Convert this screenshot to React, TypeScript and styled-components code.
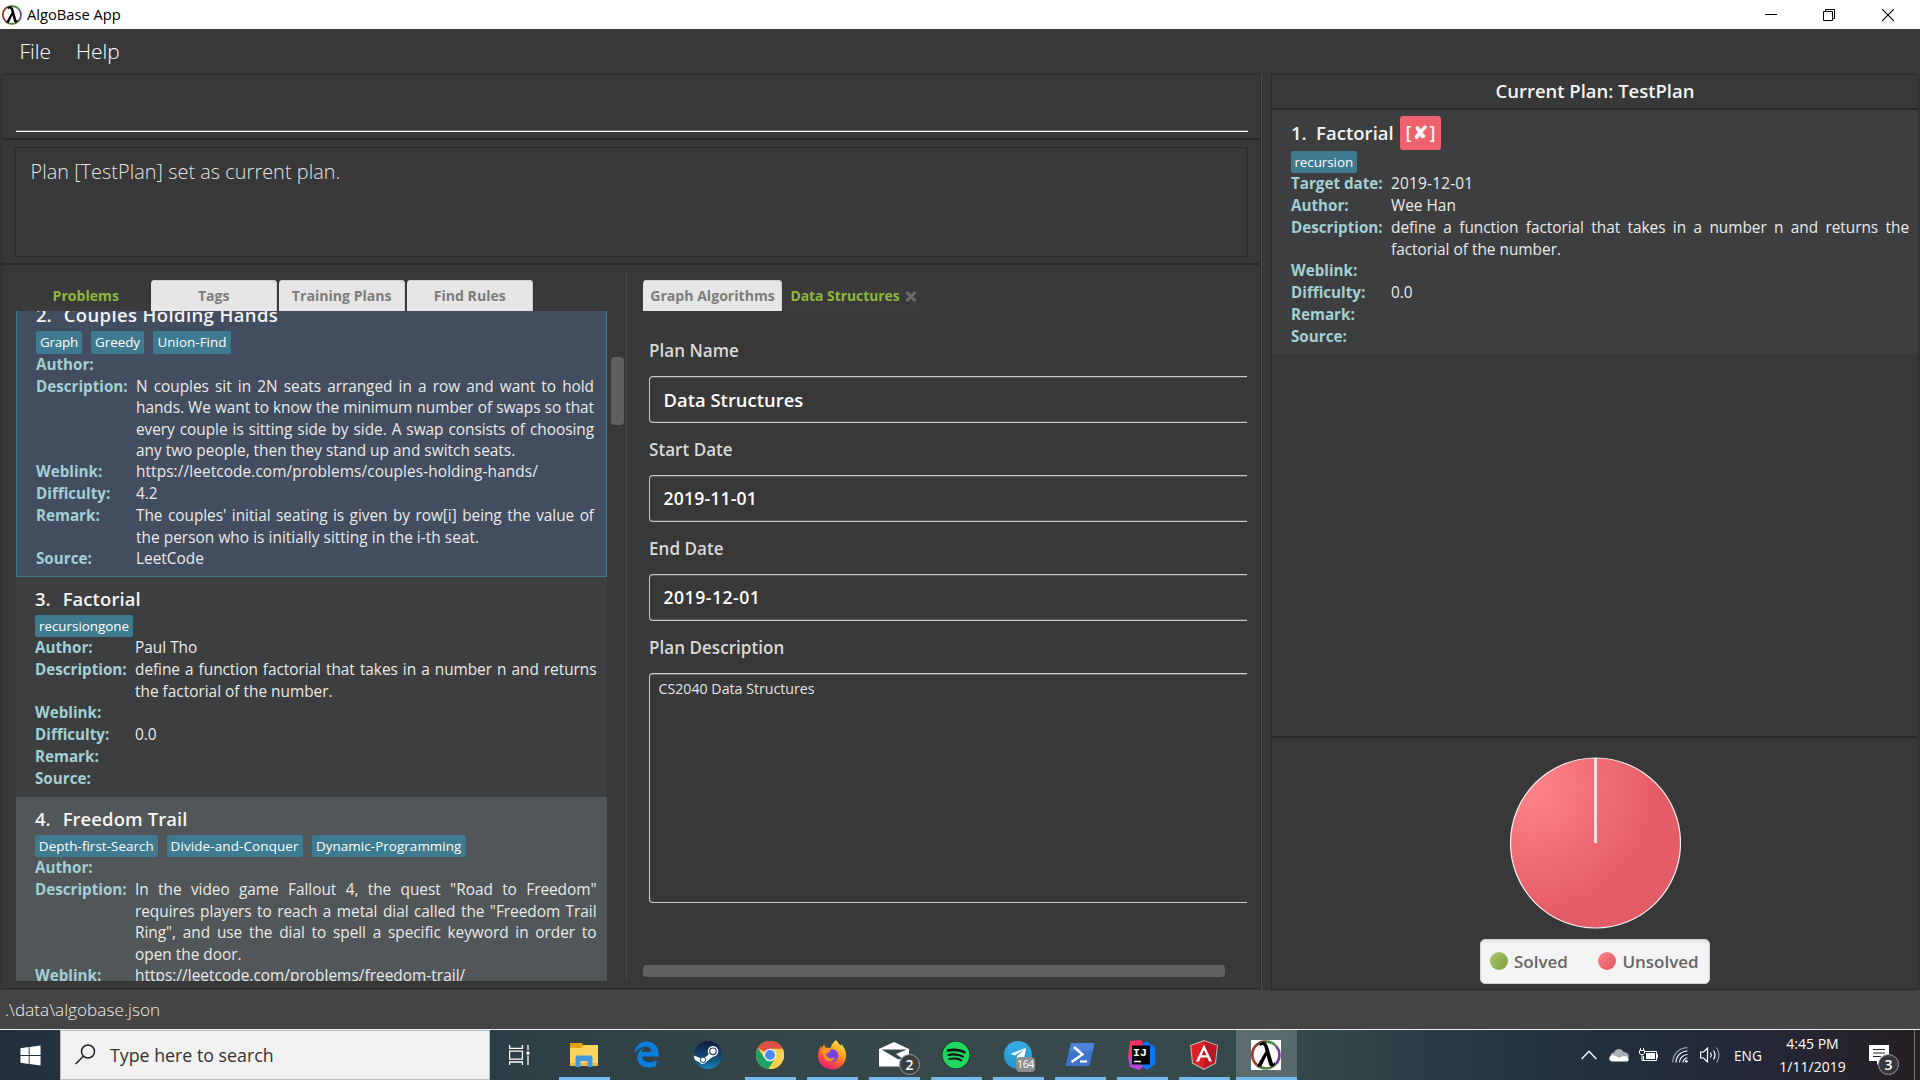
import React from "react";
import styled, { createGlobalStyle, css } from "styled-components";
import { FaEdgeLegacy, FaSpotify, FaTelegramPlane, FaWindows } from "react-icons/fa";

const GlobalStyle = createGlobalStyle`
  * { box-sizing: border-box; }
  body { margin: 0; background: #383838; overflow: hidden; font-family: "Open Sans", "Noto Sans", sans-serif; }
`;

const edge = "#2b2b2b";
const teal = "#3e7b91";

/* ---------- window chrome ---------- */

const Desktop = styled.div`
  width: 1920px;
  height: 1080px;
  display: flex;
  flex-direction: column;
  background: #383838;
  overflow: hidden;
`;

const TitleBar = styled.header`
  height: 29px;
  flex: none;
  display: flex;
  align-items: center;
  background: #fff;
  padding: 0 3px 0 2px;
  color: #000;
`;

const AppTitle = styled.span`
  margin-left: 5px;
  flex: 1;
  font-size: 14.7px;
  line-height: 29px;
  height: 29px;
`;

const WindowButton = styled.button`
  width: 58.5px;
  height: 28px;
  padding: 0;
  border: 0;
  background: none;
  display: grid;
  place-items: center;
`;

const MenuBar = styled.nav`
  height: 45px;
  flex: none;
  display: flex;
  align-items: center;
  gap: 25px;
  padding: 0 0 1px 19.5px;
  color: #fff;
  font-size: 20.9px;
  font-weight: 300;
`;

const Main = styled.main`
  height: 916px;
  flex: none;
  display: flex;
  padding-left: 1px;
`;

const LeftColumn = styled.section`
  width: 1260px;
  display: flex;
  flex-direction: column;
  border: 1px solid ${edge};
  border-width: 1px 1px 0;
`;

const ColumnDivider = styled.div`
  width: 10px;
  border-left: 1px solid #4d4d4d;
`;

const StatusBar = styled.footer`
  height: 39px;
  flex: none;
  background: #444;
  color: #eee;
  font-size: 17.1px;
  font-weight: 300;
  line-height: 39px;
  padding-left: 5px;
  letter-spacing: 0.05px;
`;

/* ---------- command + result ---------- */

const CommandPane = styled.div`
  height: 65px;
  flex: none;
  padding: 0 12px 0 14px;
  border-bottom: 2px solid ${edge};
`;

const CommandInput = styled.input`
  display: block;
  width: 100%;
  height: 57px;
  padding: 0;
  border: 0;
  outline: 0;
  background: transparent;
  color: #fff;
  border-bottom: 1px solid #fff;
  box-shadow: inset 0 -1px 0 #6c6c6c;
`;

const ResultPane = styled.div`
  height: 125px;
  flex: none;
  padding: 7px 12px 6px 13px;
  border-bottom: 2px solid ${edge};
`;

const ResultBox = styled.div`
  height: 110px;
  border: 1px solid ${edge};
  padding: 10px 0 0 14.5px;
  color: #e4e4e4;
  font-size: 19.84px;
  font-weight: 300;
  line-height: 27px;
  letter-spacing: 0.06px;
`;

/* ---------- lower split ---------- */

const SplitPane = styled.div`
  height: 724px;
  flex: none;
  display: flex;
  padding-top: 8px;
  border-bottom: 1px solid ${edge};
`;

const ListSide = styled.div`
  width: 624px;
  padding: 7px 0 0 14px;
`;

const DetailSide = styled.div`
  width: 622px;
  height: 707px;
  padding: 7px 0 0 16px;
  border-left: 1px solid #4a4a4a;
`;

const TabBar = styled.div<{ $indent?: number; $gap: number }>`
  display: flex;
  height: 31px;
  gap: ${(p) => p.$gap}px;
  padding-left: ${(p) => p.$indent ?? 0}px;
`;

const Tab = styled.div<{ $active?: boolean; $width: number; $pad?: number }>`
  width: ${(p) => p.$width}px;
  display: flex;
  align-items: center;
  justify-content: ${(p) => (p.$pad ? "flex-start" : "center")};
  padding-left: ${(p) => p.$pad ?? 0}px;
  gap: 5px;
  border-radius: 4px 4px 0 0;
  font-size: 14.1px;
  font-weight: 700;
  white-space: nowrap;
  ${(p) =>
    p.$active
      ? css`
          background: #3a3a3a;
          color: #8fb83e;
        `
      : css`
          background: #e6e6e6;
          color: #7c7c7c;
          box-shadow: inset -1px 1px 0 #cfcfcf;
        `}
`;

const ClosableTab = styled(Tab)`
  font-size: 13.85px;
`;

const ListRow = styled.div`
  display: flex;
  height: 670px;
`;

const ProblemList = styled.div`
  width: 591px;
  height: 670px;
  overflow: hidden;
  display: flex;
  flex-direction: column;
`;

const VerticalTrack = styled.div`
  padding: 46px 0 0 4px;
`;

const VerticalThumb = styled.div`
  width: 13px;
  height: 68px;
  border-radius: 4px;
  background: #606060;
`;

const CellTitle = styled.h2<{ $tracking?: number }>`
  display: flex;
  height: 25px;
  margin: 0 0 3.7px;
  color: #f4f4f4;
  font-size: 18.45px;
  font-weight: 600;
  line-height: 25px;
  white-space: nowrap;
  letter-spacing: ${(p) => p.$tracking ?? 0.1}px;
`;

const Cell = styled.article<{ $tone: "even" | "odd" | "selected" }>`
  flex: none;
  padding: 9.3px 10.5px 6.5px 19px;
  background: ${(p) => ({ even: "#3c3e3f", odd: "#515658", selected: "#424d5f" })[p.$tone]};
  ${(p) =>
    p.$tone === "selected" &&
    css`
      margin-top: -18px;
      padding: 8px 12px 5.6px 19px;
      border: 1px solid ${teal};
      ${CellTitle} {
        margin-bottom: 4.3px;
      }
    `}
`;

const CellIndex = styled.span<{ $gap: number }>`
  margin-right: ${(p) => p.$gap}px;
  letter-spacing: 0;
`;

const Tags = styled.div`
  display: flex;
  gap: 9px;
  height: 22.7px;
`;

const Tag = styled.span<{ $width: number; $tracking: number }>`
  width: ${(p) => p.$width}px;
  border-radius: 2px;
  background: ${teal};
  color: #fff;
  font-size: 13.4px;
  line-height: 22px;
  letter-spacing: ${(p) => p.$tracking}px;
  text-align: center;
  white-space: nowrap;
`;

const Field = styled.div`
  display: grid;
  grid-template-columns: 100px 1fr;
`;

const FieldName = styled.span`
  height: 22px;
  color: #a3d0d5;
  font-size: 15.2px;
  font-weight: 700;
  line-height: 21px;
  white-space: nowrap;
`;

const FieldValue = styled.div`
  color: #eaeaea;
  font-size: 15.4px;
`;

const Line = styled.div<{ $fill: boolean; $tracking: number }>`
  height: 21.3px;
  line-height: 21.3px;
  white-space: nowrap;
  letter-spacing: ${(p) => p.$tracking}px;
  &:first-child {
    height: 21.5px;
    line-height: 21.5px;
  }
  ${(p) =>
    p.$fill &&
    css`
      white-space: normal;
      text-align: justify;
      text-align-last: justify;
    `}
`;

/* ---------- plan form ---------- */

const Form = styled.div`
  height: 653px;
  padding: 26.4px 0 0 6px;
  width: 604px;
  overflow: hidden;
`;

const FormLabel = styled.label`
  display: block;
  height: 26px;
  margin-bottom: 12.6px;
  color: #d9d9d9;
  font-size: 17.05px;
  font-weight: 600;
  line-height: 28px;
  letter-spacing: 0.03px;
`;

const FormInput = styled.div<{ $tracking?: number }>`
  height: 47px;
  margin-bottom: 13.4px;
  padding-left: 13.5px;
  border: 1px solid #c8c8c8;
  border-right: 0;
  border-radius: 4px 0 0 4px;
  box-shadow: inset 0 1px 0 #5a5a5a, inset 0 -1px 0 #5a5a5a;
  color: #fff;
  font-size: 18.33px;
  font-weight: 600;
  line-height: 45px;
  letter-spacing: ${(p) => p.$tracking ?? 0.05}px;
`;

const FormDate = styled(FormInput)`
  font-size: 17.6px;
  line-height: 45.5px;
`;

const FormArea = styled.div`
  height: 230px;
  padding: 4px 0 0 8.5px;
  border: 1px solid #d0d0d0;
  border-right: 0;
  border-radius: 4px 0 0 4px;
  box-shadow: inset 0 1px 0 #6a6a6a;
  color: #e4e4e4;
  font-size: 14.2px;
  line-height: 22px;
`;

const HorizontalThumb = styled.div`
  width: 582px;
  height: 12px;
  margin-top: 1px;
  border-radius: 4px;
  background: #616161;
`;

/* ---------- current plan ---------- */

const RightColumn = styled.section`
  width: 648px;
  display: flex;
  flex-direction: column;
  border: 1px solid ${edge};
`;

const PlanHeading = styled.h1`
  height: 35px;
  flex: none;
  margin: 0;
  border-bottom: 2px solid ${edge};
  color: #f4f4f4;
  font-size: 18.47px;
  font-weight: 600;
  line-height: 32px;
  text-align: center;
`;

const PlanList = styled.div`
  height: 628px;
  flex: none;
  border-bottom: 2px solid ${edge};
`;

const PlanCell = styled.article`
  height: 244px;
  padding: 6px 9px 0 19px;
  background: #3c3e3f;
`;

const PlanTitle = styled(CellTitle)`
  height: 34px;
  margin: 0 0 0.5px;
  line-height: 33.5px;
`;

const UnsolvedMark = styled.span`
  width: 41px;
  height: 34px;
  margin-left: 6.5px;
  padding-left: 1px;
  border-radius: 3px;
  background: #ee626e;
  text-align: center;
  font-size: 18px;
  letter-spacing: 1.6px;
`;

const ChartPane = styled.div`
  flex: 1;
  display: flex;
  flex-direction: column;
  align-items: center;
  padding-top: 18.6px;
`;

const Legend = styled.div`
  width: 230px;
  height: 45px;
  margin-top: 10px;
  display: flex;
  align-items: center;
  padding-left: 8.5px;
  gap: 30px;
  border: 1px solid #cfcfcf;
  border-radius: 5px;
  background: #f4f4f4;
  box-shadow: inset 0 2px 2px #e4e4e4;
`;

const LegendItem = styled.span`
  display: flex;
  align-items: center;
  gap: 6.5px;
  color: #666;
  font-size: 17px;
  font-weight: 600;
`;

const Dot = styled.i<{ $from: string; $to: string }>`
  width: 18px;
  height: 18px;
  border-radius: 50%;
  background: linear-gradient(135deg, ${(p) => p.$from}, ${(p) => p.$to} 70%);
`;

/* ---------- taskbar ---------- */

const Taskbar = styled.div`
  height: 51px;
  flex: none;
  display: flex;
  border-top: 1px solid #f0f0f0;
  background: linear-gradient(90deg, #22303d 0, #2c3d45 490px, #364749 800px, #384a4c 1100px, #33494b 1300px, #293c44 1430px, #22303d 1600px, #22293a 1730px, #26242f 1820px, #251f23 1920px);
`;

const StartButton = styled.div`
  width: 60px;
  display: grid;
  place-items: center;
  color: #fff;
  font-size: 23px;
`;

const Search = styled.div`
  width: 430px;
  display: flex;
  align-items: center;
  gap: 14px;
  padding: 0 0 1px 14px;
  border: 1px solid #bdbdbd;
  background: #f1f1f1;
  color: #333;
  font-size: 17.8px;
`;

const TaskView = styled.div`
  width: 63px;
  display: grid;
  place-items: center start;
  padding-left: 19px;
`;

const TaskItem = styled.div<{ $state?: "running" | "active" }>`
  position: relative;
  width: 62px;
  display: grid;
  place-items: center;
  padding-bottom: 1px;
  background: ${(p) => (p.$state === "active" ? "linear-gradient(90deg, #5d6d6e, #56696b)" : "none")};
  &::after {
    content: "";
    position: absolute;
    bottom: 0;
    left: ${(p) => (p.$state === "active" ? 0 : 6)}px;
    right: ${(p) => (p.$state === "active" ? 0 : 5)}px;
    height: 3px;
    background: ${(p) => (p.$state ? "#76b9ed" : "none")};
  }
`;

const ActiveTaskItem = styled(TaskItem)`
  width: 61px;
  margin-left: 1px;
  padding-right: 1px;
`;

const Disc = styled.span<{ $back: string; $fore: string }>`
  width: 28px;
  height: 28px;
  border-radius: 50%;
  display: grid;
  place-items: center;
  background: ${(p) => p.$back};
  color: ${(p) => p.$fore};
  overflow: hidden;
`;

const CountBadge = styled.span`
  position: absolute;
  left: 36px;
  top: 24px;
  width: 21px;
  height: 21px;
  border: 1px solid #9a9d9e;
  border-radius: 50%;
  background: #3b3f40;
  color: #fff;
  font-size: 14px;
  font-weight: 600;
  line-height: 19px;
  text-align: center;
`;

const UnreadBadge = styled.span`
  position: absolute;
  left: 29px;
  top: 27px;
  width: 19px;
  height: 15px;
  border-radius: 4px;
  background: #8b8f91;
  color: #fff;
  font-size: 10.5px;
  line-height: 14px;
  text-align: center;
  letter-spacing: -0.4px;
`;

const Spacer = styled.div`
  flex: 1;
`;

const Tray = styled.div`
  display: flex;
  align-items: center;
  color: #fff;
`;

const Language = styled.span`
  width: 45px;
  padding-left: 2px;
  font-size: 13.7px;
`;

const Clock = styled.div`
  width: 71px;
  font-size: 14px;
  line-height: 23px;
  text-align: center;
`;

const Notifications = styled.div`
  position: relative;
  width: 65px;
  height: 50px;
  margin-left: 2px;
  padding: 15px 0 0 19px;
  border-right: 1px solid #777;
`;

const NotificationCount = styled(CountBadge)`
  left: 28px;
  background: #37363c;
`;

const TrayIcon = styled.svg<{ $after: number }>`
  display: block;
  margin-right: ${(p) => p.$after}px;
`;

const ShowDesktop = styled.div`
  width: 5px;
`;

/* ---------- icons ---------- */

const LambdaIcon = ({ size }: { size: number }) => (
  <svg width={size} height={size} viewBox="0 0 30 30">
    <rect width="30" height="30" fill="#fff" />
    <g fill="none" strokeWidth="2.6">
      <path d="M5 5.5A13.4 13.4 0 0 1 15 1.6" stroke="#5f4630" />
      <path d="M15 1.6A13.4 13.4 0 0 1 25 6" stroke="#4f8a45" />
      <path d="M25 6A13.4 13.4 0 0 1 25 24" stroke="#6c3f94" />
      <path d="M25 24A13.4 13.4 0 0 1 6 25" stroke="#557c3c" />
      <path d="M6 25A13.4 13.4 0 0 1 5 5.5" stroke="#a33420" />
    </g>
    <path d="M8.5 3.8C12 1 15.8 2 17 6.500L21.500 22c.5 2 1.300 2 2.300 0l.7 1c-1.500 4.500-5.500 5-6.700.5L15.600 15.500 10.300 26.500H5.600L14.500 11.200 13.600 7.600C12.800 4.700 11 4.500 9 6.200Z" fill="#000" />
  </svg>
);

const ExplorerIcon = () => (
  <svg width="28" height="24" viewBox="0 0 28 24">
    <path d="M0 0h12l2 3v3H0z" fill="#e0a10a" />
    <path d="M0 5h11l3-3h14v21H0z" fill="#ffd35e" />
    <path d="M0 20h28v3H0z" fill="#efbd3b" />
    <path d="M5.500 24V14.500q0-2 2-2h13q2 0 2 2V24h-5v-6h-7v6z" fill="#3d9ae0" />
  </svg>
);

const SteamIcon = () => (
  <Disc $back="linear-gradient(#131b3d, #12507c 65%, #1a86b8)" $fore="#fff">
    <svg width="28" height="28" viewBox="0 0 28 28">
      <path d="M0 14.500 8.500 18l5-3.500 4.500-5.500 4 4.500-7.500 5.500-3.500 3q-3 2.500-5.500-.8L0 18.500z" fill="#fff" />
      <circle cx="19" cy="10.300" r="5.300" fill="#fff" />
      <circle cx="19" cy="10.300" r="3.300" fill="#fff" stroke="#25476e" strokeWidth="1.200" />
      <circle cx="9" cy="18.800" r="2.700" fill="#fff" stroke="#25476e" strokeWidth="1" />
    </svg>
  </Disc>
);

const ChromeIcon = () => (
  <svg width="28" height="28" viewBox="0 0 28 28">
    <circle cx="14" cy="14" r="14" fill="#fbd04d" />
    <path d="M14 14 1.900 7A14 14 0 0 1 26.500 7.500z" fill="#dd5144" />
    <path d="M14 14V7.700h12.500A14 14 0 0 0 14 0z" fill="#dd5144" />
    <path d="M1.900 7A14 14 0 0 0 12.500 27.900L19.400 17.200 14 14 8.600 17.200z" fill="#1da462" />
    <path d="M26.600 7.700H14l5.400 9.500L12.500 27.900A14 14 0 0 0 26.600 7.700z" fill="#fbd04d" />
    <circle cx="14" cy="14" r="6.300" fill="#f4f4f4" />
    <circle cx="14" cy="14" r="5" fill="#4c8bf5" />
  </svg>
);

const FirefoxIcon = () => (
  <svg width="30" height="30" viewBox="0 0 30 30">
    <defs>
      <linearGradient id="fox" x1="0.800" y1="0" x2="0.250" y2="1">
        <stop offset="0" stopColor="#fff04a" />
        <stop offset="0.400" stopColor="#ff9a1f" />
        <stop offset="0.700" stopColor="#ff4a3f" />
        <stop offset="1" stopColor="#e31587" />
      </linearGradient>
    </defs>
    <path d="M19 0c2 2.500 3.500 4 4.200 6l1-2C28 8 29.500 12 29 17 28 25 22 29.500 15 29.500S1.500 24.500 1 17c-.2-4 1-8 3-11l.8 2L7 4.500l1.500 3 5 .5c1.500-4 3-6 5.500-8z" fill="url(#fox)" />
    <circle cx="15" cy="15.500" r="6.300" fill="#7542e4" />
    <path d="M5 10q4-2 8.500.5L12 12.500l-3 1.500q1 4 5 4.500l4-1q-2 4.500-7 3.500-6-2-6-11z" fill="#ff9320" />
  </svg>
);

const MailIcon = () => (
  <svg width="30" height="25" viewBox="0 0 30 25">
    <path d="M0 7 15 0l15 7v17.500H0z" fill="#fff" />
    <path d="M2.500 7.500h25.500L17 12l7 5-5 .2z" fill="#374648" />
  </svg>
);

const PowerShellIcon = () => (
  <svg width="30" height="23" viewBox="0 0 30 23">
    <path d="M6 0h23.500L24.500 23H.5z" fill="#3d74cc" />
    <path d="M6 0h23.500l-1.600 8H4z" fill="#4b83d8" />
    <path d="m9 4 8.500 7.500L6.500 19" fill="none" stroke="#fff" strokeWidth="2.400" />
    <path d="M15 18.500h7" stroke="#fff" strokeWidth="2.200" />
  </svg>
);

const IntelliJIcon = () => (
  <svg width="28" height="30" viewBox="0 0 28 30">
    <path d="M2 1 13 0l5 9L4 23 0 17z" fill="#fc3160" />
    <path d="M0 18 12 8l5 18-6 4-9-3z" fill="#b24cd8" />
    <path d="M14 5 18 1l9 6 .5 17-8.500 6-7-6z" fill="#0a76f6" />
    <rect x="4" y="5.500" width="18" height="19" fill="#050505" />
    <text x="5" y="15.500" fontFamily="Liberation Mono, monospace" fontSize="11.500" fontWeight="700" fill="#fff">IJ</text>
    <path d="M6 21.500h7" stroke="#fff" strokeWidth="1.500" />
  </svg>
);

const AngularIcon = () => (
  <svg width="28" height="30" viewBox="0 0 28 30">
    <path d="M14 0 28 5 26 23.500 14 30 2 23.500 0 5z" fill="#b3b3b3" />
    <path d="M14 1.300 26.700 5.800 24.900 22.700 14 28.600 3.100 22.700 1.300 5.800z" fill="#df1f26" />
    <path d="M14 1.300 26.700 5.800 24.900 22.700 14 28.600z" fill="#bb1721" />
    <path d="M14 4.500 6 21.500h3l1.600-4h6.800l1.600 4h3zM14 10l2.400 5.200h-4.800z" fill="#fff" fillRule="evenodd" />
  </svg>
);

const PieChart = () => (
  <svg width="172" height="172" viewBox="0 0 172 172">
    <defs>
      <radialGradient id="pie" gradientUnits="userSpaceOnUse" cx="22" cy="30" r="150">
        <stop offset="0" stopColor="#ff838b" />
        <stop offset="0.850" stopColor="#e45c66" />
        <stop offset="1" stopColor="#e45c66" />
      </radialGradient>
    </defs>
    <circle cx="86.500" cy="86" r="85" fill="url(#pie)" stroke="#f4f4f4" strokeWidth="1.200" />
    <path d="M86.500 1v85" stroke="#f4f4f4" strokeWidth="2.600" />
  </svg>
);

/* ---------- data ---------- */

type FieldData = [string, string[]];
interface TagData {
  label: string;
  width: number;
  tracking: number;
}
interface Problem {
  index: number;
  name: string;
  tracking?: number;
  tone: "even" | "odd" | "selected";
  tags: TagData[];
  fields: FieldData[];
}

const problems: Problem[] = [
  {
    index: 2,
    name: "Couples Holding Hands",
    tracking: 0.4,
    tone: "selected",
    tags: [
      { label: "Graph", width: 46, tracking: -0.2 },
      { label: "Greedy", width: 53, tracking: 0 },
      { label: "Union-Find", width: 78, tracking: 0.05 },
    ],
    fields: [
      ["Author:", []],
      [
        "Description:",
        [
          "N couples sit in 2N seats arranged in a row and want to hold",
          "hands. We want to know the minimum number of swaps so that",
          "every couple is sitting side by side. A swap consists of choosing",
          "any two people, then they stand up and switch seats.",
        ],
      ],
      ["Weblink:", ["https://leetcode.com/problems/couples-holding-hands/"]],
      ["Difficulty:", ["4.2"]],
      [
        "Remark:",
        [
          "The couples' initial seating is given by row[i] being the value of",
          "the person who is initially sitting in the i-th seat.",
        ],
      ],
      ["Source:", ["LeetCode"]],
    ],
  },
  {
    index: 3,
    name: "Factorial",
    tone: "even",
    tags: [{ label: "recursiongone", width: 98, tracking: 0 }],
    fields: [
      ["Author:", ["Paul Tho"]],
      ["Description:", ["define a function factorial that takes in a number n and returns", "the factorial of the number."]],
      ["Weblink:", []],
      ["Difficulty:", ["0.0"]],
      ["Remark:", []],
      ["Source:", []],
    ],
  },
  {
    index: 4,
    name: "Freedom Trail",
    tone: "odd",
    tags: [
      { label: "Depth-first-Search", width: 122.6, tracking: 0.05 },
      { label: "Divide-and-Conquer", width: 136, tracking: 0.15 },
      { label: "Dynamic-Programming", width: 154.2, tracking: 0.08 },
    ],
    fields: [
      ["Author:", []],
      [
        "Description:",
        [
          'In the video game Fallout 4, the quest "Road to Freedom"',
          'requires players to reach a metal dial called the "Freedom Trail',
          'Ring", and use the dial to spell a specific keyword in order to',
          "open the door.",
        ],
      ],
      ["Weblink:", ["https://leetcode.com/problems/freedom-trail/"]],
    ],
  },
];

const planFields: FieldData[] = [
  ["Target date:", ["2019-12-01"]],
  ["Author:", ["Wee Han"]],
  ["Description:", ["define a function factorial that takes in a number n and returns the", "factorial of the number."]],
  ["Weblink:", []],
  ["Difficulty:", ["0.0"]],
  ["Remark:", []],
  ["Source:", []],
];

const lineTracking = (field: string, wraps: boolean, line: string) => {
  if (wraps) return -0.04;
  if (field === "Target date:") return 0.2;
  if (field === "Weblink:") return line.length > 50 ? 0.09 : 0.03;
  return field === "Remark:" ? 0.04 : 0;
};

const Fields = ({ items }: { items: FieldData[] }) => (
  <>
    {items.map(([name, lines]) => (
      <Field key={name}>
        <FieldName>{name}</FieldName>
        <FieldValue>
          {lines.map((line, i) => {
            const wraps = i < lines.length - 1;
            return (
              <Line key={line} $fill={wraps} $tracking={lineTracking(name, wraps, line)}>
                {line}
              </Line>
            );
          })}
        </FieldValue>
      </Field>
    ))}
  </>
);

export default function App() {
  return (
    <Desktop>
      <GlobalStyle />
      <TitleBar>
        <LambdaIcon size={20} />
        <AppTitle>AlgoBase App</AppTitle>
        <WindowButton aria-label="Minimize">
          <svg width="12" height="12">
            <path d="M0 5.500h12" stroke="#000" />
          </svg>
        </WindowButton>
        <WindowButton aria-label="Restore">
          <svg width="12" height="12" fill="none" stroke="#000">
            <path d="M.5 2.500h9v9h-9zM2.500 2.500v-2h9v9h-2" />
          </svg>
        </WindowButton>
        <WindowButton aria-label="Close">
          <svg width="12" height="12" stroke="#000" strokeWidth="1.100">
            <path d="M0 0l12 12M12 0L0 12" />
          </svg>
        </WindowButton>
      </TitleBar>
      <MenuBar>
        <span>File</span>
        <span>Help</span>
      </MenuBar>

      <Main>
        <LeftColumn>
          <CommandPane>
            <CommandInput />
          </CommandPane>
          <ResultPane>
            <ResultBox>Plan [TestPlan] set as current plan.</ResultBox>
          </ResultPane>
          <SplitPane>
            <ListSide>
              <TabBar $gap={2.5} $indent={7}>
                <Tab $width={125.5} $active>Problems</Tab>
                <Tab $width={125.5}>Tags</Tab>
                <Tab $width={125.5}>Training Plans</Tab>
                <Tab $width={125.5}>Find Rules</Tab>
              </TabBar>
              <ListRow>
                <ProblemList>
                  {problems.map((p) => (
                    <Cell key={p.index} $tone={p.tone}>
                      <CellTitle $tracking={p.tracking}>
                        <CellIndex $gap={12}>{p.index}.</CellIndex>
                        {p.name}
                      </CellTitle>
                      <Tags>
                        {p.tags.map((t) => (
                          <Tag key={t.label} $width={t.width} $tracking={t.tracking}>
                            {t.label}
                          </Tag>
                        ))}
                      </Tags>
                      <Fields items={p.fields} />
                    </Cell>
                  ))}
                </ProblemList>
                <VerticalTrack>
                  <VerticalThumb />
                </VerticalTrack>
              </ListRow>
            </ListSide>
            <DetailSide>
              <TabBar $gap={0}>
                <Tab $width={139}>Graph Algorithms</Tab>
                <ClosableTab $width={144} $pad={8.5} $active>
                  Data Structures
                  <svg width="12" height="12" stroke="#6c6c6c" strokeWidth="3">
                    <path d="M1.500 2l9 9M10.500 2l-9 9" />
                  </svg>
                </ClosableTab>
              </TabBar>
              <Form>
                <FormLabel>Plan Name</FormLabel>
                <FormInput>Data Structures</FormInput>
                <FormLabel>Start Date</FormLabel>
                <FormDate $tracking={0.18}>2019-11-01</FormDate>
                <FormLabel>End Date</FormLabel>
                <FormDate $tracking={0.5}>2019-12-01</FormDate>
                <FormLabel>Plan Description</FormLabel>
                <FormArea>CS2040 Data Structures</FormArea>
              </Form>
              <HorizontalThumb />
            </DetailSide>
          </SplitPane>
        </LeftColumn>
        <ColumnDivider />
        <RightColumn>
          <PlanHeading>Current Plan: TestPlan</PlanHeading>
          <PlanList>
            <PlanCell>
              <PlanTitle $tracking={0.05}>
                <CellIndex $gap={9.5}>1.</CellIndex>
                Factorial
                <UnsolvedMark>[✘]</UnsolvedMark>
              </PlanTitle>
              <Tags>
                <Tag $width={65.5} $tracking={-0.05}>recursion</Tag>
              </Tags>
              <Fields items={planFields} />
            </PlanCell>
          </PlanList>
          <ChartPane>
            <PieChart />
            <Legend>
              <LegendItem>
                <Dot $from="#a9cb6c" $to="#8aab48" />
                Solved
              </LegendItem>
              <LegendItem>
                <Dot $from="#fb858d" $to="#e8626c" />
                Unsolved
              </LegendItem>
            </Legend>
          </ChartPane>
        </RightColumn>
      </Main>

      <StatusBar>.\data\algobase.json</StatusBar>

      <Taskbar>
        <StartButton>
          <FaWindows />
        </StartButton>
        <Search>
          <svg width="21" height="21" fill="none" stroke="#222" strokeWidth="1.500">
            <circle cx="13" cy="7.500" r="6.500" />
            <path d="M8.300 12.300.6 20" />
          </svg>
          Type here to search
        </Search>
        <TaskView>
          <svg width="21" height="20" fill="none" stroke="#fff" strokeWidth="1.300">
            <path d="M.6 0v3.400h12.800V0M.6 6.200h12.800v8H.6zM.6 20v-3h12.800v3M19 0v5M19 10.500V20" />
            <path d="M17.500 6.500h3v3h-3z" fill="#fff" stroke="none" />
          </svg>
        </TaskView>
        <TaskItem $state="running"><ExplorerIcon /></TaskItem>
        <TaskItem><FaEdgeLegacy size={27} color="#0a7fe0" /></TaskItem>
        <TaskItem><SteamIcon /></TaskItem>
        <TaskItem $state="running"><ChromeIcon /></TaskItem>
        <TaskItem $state="running"><FirefoxIcon /></TaskItem>
        <TaskItem $state="running">
          <MailIcon />
          <CountBadge>2</CountBadge>
        </TaskItem>
        <TaskItem $state="running">
          <Disc $back="#161616" $fore="#1ed760"><FaSpotify size={28} /></Disc>
        </TaskItem>
        <TaskItem $state="running">
          <Disc $back="linear-gradient(#36aee2, #1e96d2)" $fore="#fff"><FaTelegramPlane size={17} /></Disc>
          <UnreadBadge>164</UnreadBadge>
        </TaskItem>
        <TaskItem $state="running"><PowerShellIcon /></TaskItem>
        <TaskItem $state="running"><IntelliJIcon /></TaskItem>
        <TaskItem $state="running"><AngularIcon /></TaskItem>
        <ActiveTaskItem $state="active"><LambdaIcon size={30} /></ActiveTaskItem>
        <Spacer />
        <Tray>
          <TrayIcon $after={12} width="16" height="10" fill="none" stroke="#fff" strokeWidth="1.400">
            <path d="M.6 9 8 1.300 15.400 9" />
          </TrayIcon>
          <TrayIcon $after={10} width="20" height="14" viewBox="0 0 20 14">
            <path d="M3 10C0 8 2 4.500 5 4.500 6.500 0 13 0 14.500 4 18 4 20 6.500 20 9z" fill="#a9adb4" />
            <path d="M4 13.500C-1 13.500-1 7.500 4 7l6 2.500L15 8c6 0 6 5.500 2 5.500z" fill="#fff" />
          </TrayIcon>
          <TrayIcon $after={13} width="20" height="14" viewBox="0 0 20 14" fill="none" stroke="#fff">
            <path d="M5.500 3.500h12v9h-13V8M18.500 6v4M1.500 0v2M4.500 0v2M.5 2.500h5v3l-1.500 1h-2l-1.500-1zM3 7v5.500h2" />
            <path d="M7 5h9v6H7z" fill="#fff" stroke="none" />
          </TrayIcon>
          <TrayIcon $after={12} width="16" height="16" viewBox="0 0 16 16" fill="none" stroke="#fff" strokeWidth="1.200">
            <path d="M.7 15.500A14.800 14.800 0 0 1 15.500.7" opacity=".55" />
            <path d="M4 15.500A11.500 11.500 0 0 1 15.500 4M7.500 15.500a8 8 0 0 1 8-8M11 15.500a4.500 4.500 0 0 1 4.500-4.500" />
            <circle cx="14.300" cy="14.300" r="1.300" fill="#fff" stroke="none" />
          </TrayIcon>
          <TrayIcon $after={11} width="21" height="18" viewBox="0 0 21 18" fill="none" stroke="#fff" strokeWidth="1.200">
            <path d="M.6 6v6h2.900l4 3.800V2.200L3.500 6zM10.500 6.500q1.500 2.500 0 5M13.500 4.500q3 4.500 0 9" />
            <path d="M16.500 1.500q5 7.500 0 15" opacity=".5" />
          </TrayIcon>
          <Language>ENG</Language>
          <Clock>
            4:45 PM
            <br />
            1/11/2019
          </Clock>
          <Notifications>
            <svg width="20" height="20">
              <path d="M0 0h20v16H12l-4 4v-4H0z" fill="#fff" />
              <path d="M4 4.500h12M4 8h12M4 11.500h8" stroke="#26242f" strokeWidth="1.200" />
            </svg>
            <NotificationCount>3</NotificationCount>
          </Notifications>
          <ShowDesktop />
        </Tray>
      </Taskbar>
    </Desktop>
  );
}
